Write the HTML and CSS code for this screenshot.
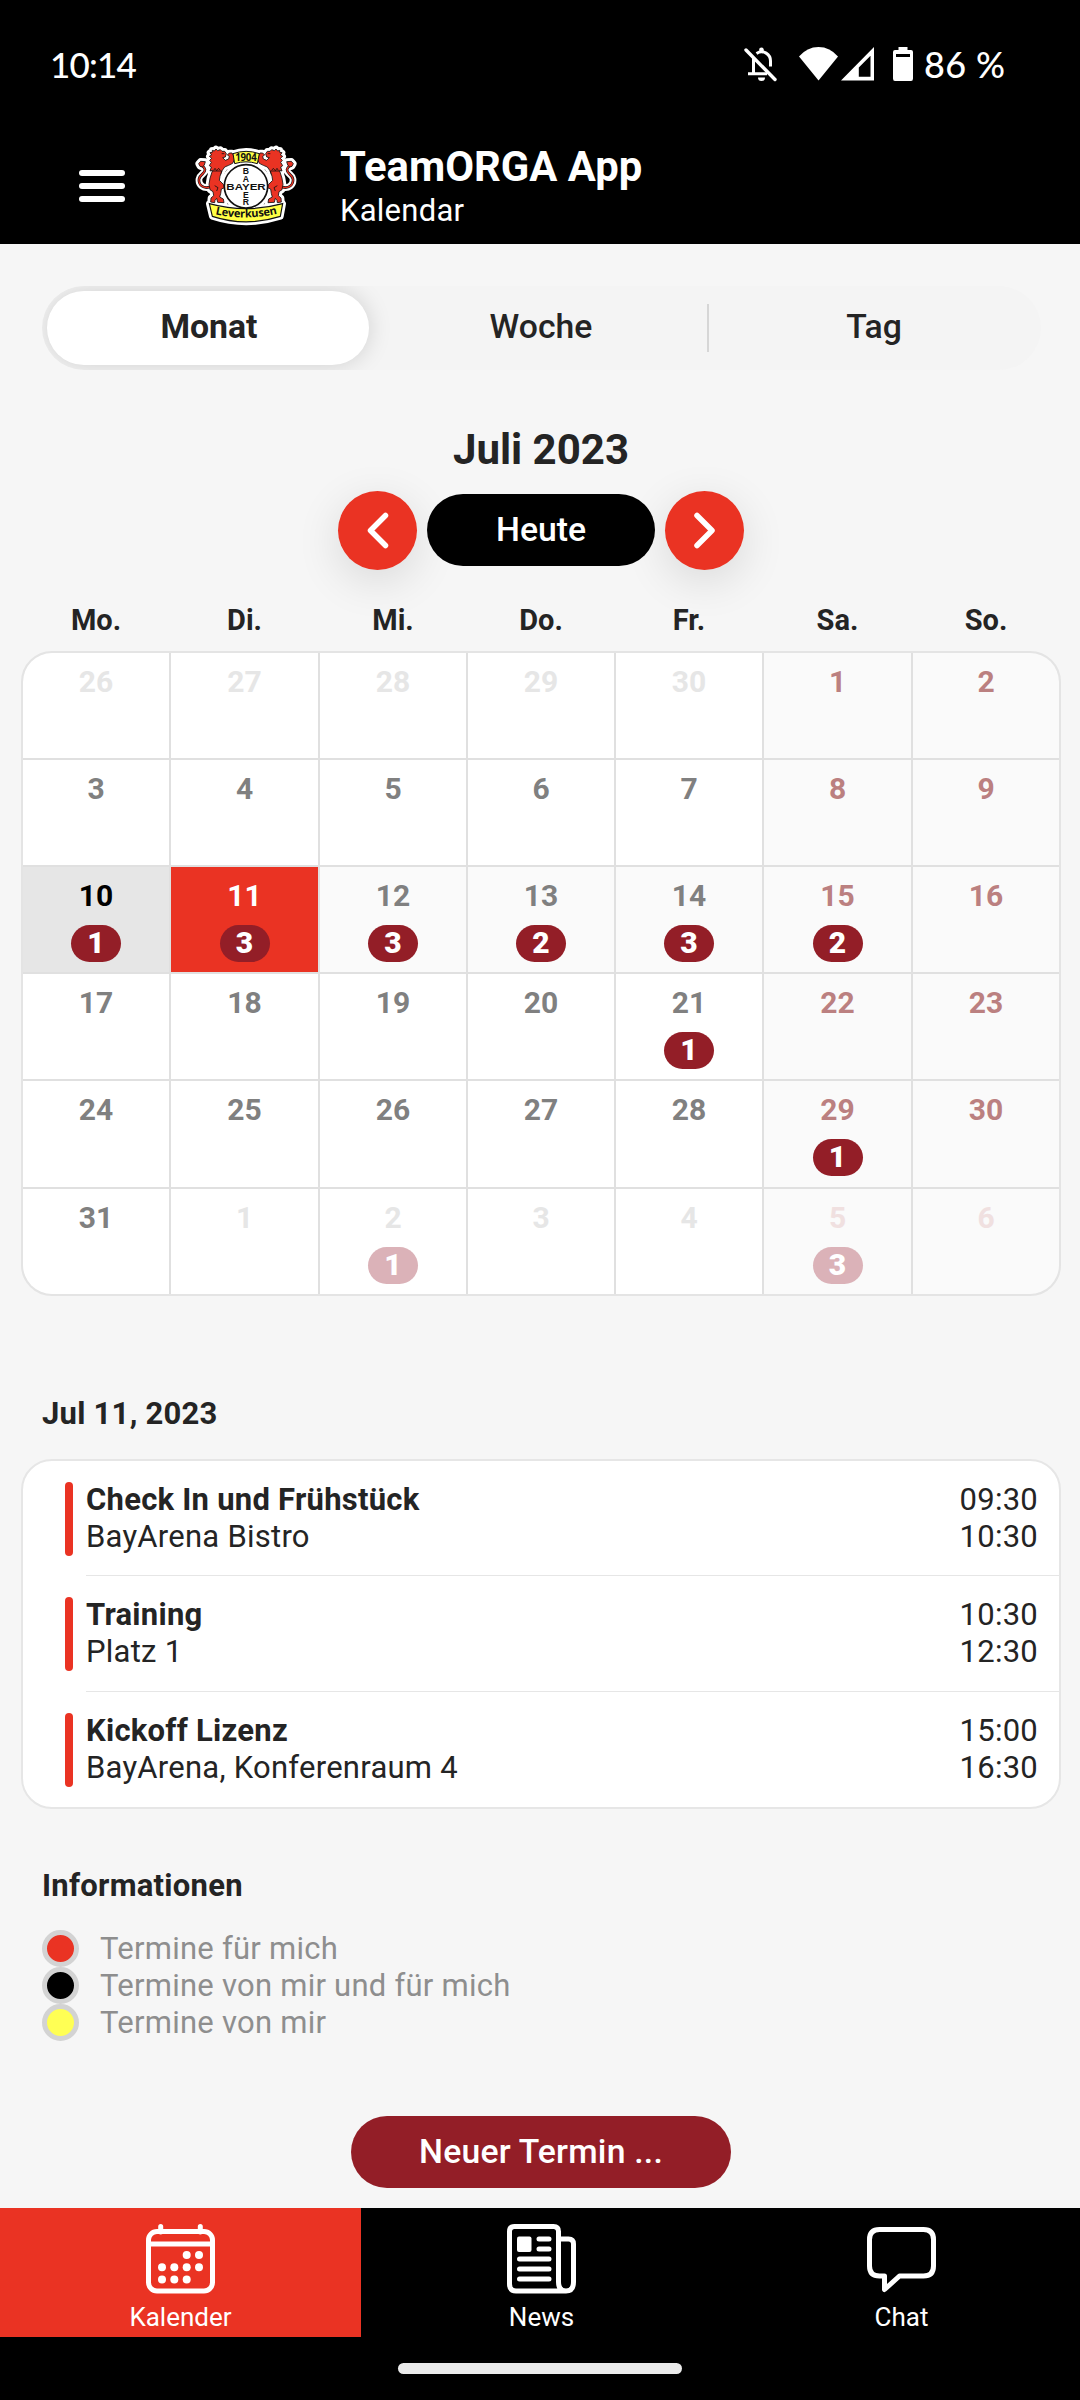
FILE: index.html
```html
<!DOCTYPE html>
<html lang="de">
<head>
<meta charset="utf-8">
<title>TeamORGA App</title>
<link rel="stylesheet" href="styles.css">
</head>
<body>
<div class="statusbar">
  <span class="clock">10:14</span>
  <div class="status-icons">
    <svg class="ic-bell" width="34" height="36" viewBox="0 0 34 36" fill="none" stroke="#fff" stroke-width="3">
      <path d="M9.500 11v17M4 27.700h19M12.500 7.500c7-4.500 14 1 14 7.500V20.500" />
      <circle cx="17.500" cy="4" r="2.400" fill="#fff" stroke="none"/>
      <path d="M14 31.500h7a3.500 3.500 0 0 1-7 0z" fill="#fff" stroke="none"/>
      <path d="M2 4L31 33.500" stroke-width="3.400" stroke-linecap="round"/>
    </svg>
    <svg class="ic-wifi" width="39" height="34" viewBox="0 0 39 34"><path d="M0 9.500Q8 0 19.500 0T39 9.500L19.500 33.500Z" fill="#fff"/></svg>
    <svg class="ic-signal" width="33" height="34" viewBox="0 0 33 34"><path fill-rule="evenodd" d="M0 33.500L33 0V33.500ZM17.800 20.500V29.800H29.500V8.800Z" fill="#fff"/></svg>
    <svg class="ic-battery" width="20" height="34" viewBox="0 0 20 34"><path fill-rule="evenodd" d="M5.500 0H14.500V3H18Q20 3 20 5V31.500Q20 34 18 34H2Q0 34 0 31.500V5Q0 3 2 3H5.500ZM3 7V10H17V7Z" fill="#fff"/></svg>
    <span class="battery-level">86 %</span>
  </div>
</div>

<header class="appbar">
  <div class="menu"><i></i><i></i><i></i></div>
  <svg class="crest" width="102" height="81" viewBox="45 46 306 243">
    <defs>
      <g id="lion">
        <path d="M97 62L103 64L108 58L113 63L121 60L126 65L134 65L139 72L136 82L128 84L136 92L146 88L148 80L142 76L148 70L156 70L160 76L163 90L158 101L146 107L134 112L127 122L122 134L117 126L110 135L106 126L99 134L97 122L90 124L94 112L88 108L94 98L89 92L95 86L88 80L95 76L90 69L97 68Z"/>
        <path d="M97 124L125 124L120 140L118 152L130 164L134 174L124 178L122 192L119 202L130 208L132 219L113 218L110 206L105 212L104 219L92 217L93 205L101 198L99 186L90 180L87 164L90 146Z"/>
      </g>
      <path id="tail" d="M90 172C70 178 55 166 57 148C59 134 76 132 75 120C74 112 68 110 64 106"/>
      <path id="tuft" d="M56 102L62 95L76 96L73 106L67 112L60 110Z"/>
      <path id="scroll" d="M88 222Q198 252 308 222L301 260Q198 293 97 260Z"/>
      <path id="year" d="M159 72Q198 58 238 72L232 102Q198 91 164 102Z"/>
      <path id="motto" d="M99 252Q198 276 299 250"/>
    </defs>
    <g fill="#fff" stroke="#fff" stroke-width="20" stroke-linejoin="round">
      <use href="#lion"/><use href="#tuft"/><use href="#tail" fill="none"/>
      <g transform="translate(396 0) scale(-1 1)"><use href="#lion"/><use href="#tuft"/><use href="#tail" fill="none"/></g>
      <use href="#scroll"/><use href="#year"/><circle cx="198" cy="170" r="66"/>
    </g>
    <g fill="#ea3323" stroke="#111" stroke-width="2.500" stroke-linejoin="round">
      <use href="#tail" fill="none" stroke-width="8"/><use href="#tail" fill="none" stroke="#ea3323" stroke-width="4"/>
      <use href="#tuft"/><use href="#lion"/><path d="M125 72h8M101 122l4-6 5 7 6-7 5 6M104 168l10 6-4 10" fill="none"/>
    </g>
    <g transform="translate(396 0) scale(-1 1)" fill="#ea3323" stroke="#111" stroke-width="2.500" stroke-linejoin="round">
      <use href="#tail" fill="none" stroke-width="8"/><use href="#tail" fill="none" stroke="#ea3323" stroke-width="4"/>
      <use href="#tuft"/><use href="#lion"/><path d="M125 72h8M101 122l4-6 5 7 6-7 5 6M104 168l10 6-4 10" fill="none"/>
    </g>
    <use href="#year" fill="#ffff45" stroke="#111" stroke-width="3"/>
    <circle cx="198" cy="170" r="65" fill="#fff" stroke="#111" stroke-width="5"/>
    <use href="#scroll" fill="#ffff45" stroke="#111" stroke-width="3.500"/>
    <g class="crest-text" text-anchor="middle">
      <text x="198" y="93" font-size="29" textLength="64">1904</text>
      <text class="wordmark" x="198" y="180" font-size="28" textLength="118" lengthAdjust="spacingAndGlyphs">BAYER</text>
      <text class="wordmark" x="198" y="132" font-size="26">B</text>
      <text class="wordmark" x="198" y="156" font-size="26">A</text>
      <text class="wordmark" x="198" y="204" font-size="26">E</text>
      <text class="wordmark" x="198" y="226" font-size="26">R</text>
      <text font-size="33"><textPath href="#motto" startOffset="50%" textLength="188">Leverkusen</textPath></text>
    </g>
  </svg>
  <div class="titles">
    <h1>TeamORGA App</h1>
    <p>Kalendar</p>
  </div>
</header>

<main class="content">
  <div class="segmented">
    <span class="segment active">Monat</span>
    <span class="segment">Woche</span>
    <span class="segment last">Tag</span>
  </div>

  <h2 class="month">Juli 2023</h2>
  <div class="pager">
    <span class="round"><svg width="79" height="79" viewBox="0 0 79 79"><path d="M47.500 24.500L32.500 39.500L47.500 54.500"/></svg></span>
    <span class="pill today">Heute</span>
    <span class="round"><svg width="79" height="79" viewBox="0 0 79 79"><path d="M32 24.500L47 39.500L32 54.500"/></svg></span>
  </div>

  <div class="weekdays"><span>Mo.</span><span>Di.</span><span>Mi.</span><span>Do.</span><span>Fr.</span><span>Sa.</span><span>So.</span></div>
  <div class="calendar">
    <div class="day out">26</div><div class="day out">27</div><div class="day out">28</div><div class="day out">29</div><div class="day out">30</div><div class="day we">1</div><div class="day we">2</div>
    <div class="day">3</div><div class="day">4</div><div class="day">5</div><div class="day">6</div><div class="day">7</div><div class="day we">8</div><div class="day we">9</div>
    <div class="day now">10<b>1</b></div><div class="day selected">11<b>3</b></div><div class="day week">12<b>3</b></div><div class="day week">13<b>2</b></div><div class="day week">14<b>3</b></div><div class="day we">15<b>2</b></div><div class="day we">16</div>
    <div class="day">17</div><div class="day">18</div><div class="day">19</div><div class="day">20</div><div class="day">21<b>1</b></div><div class="day we">22</div><div class="day we">23</div>
    <div class="day">24</div><div class="day">25</div><div class="day">26</div><div class="day">27</div><div class="day">28</div><div class="day we">29<b>1</b></div><div class="day we">30</div>
    <div class="day">31</div><div class="day out">1</div><div class="day out">2<b>1</b></div><div class="day out">3</div><div class="day out">4</div><div class="day we out">5<b>3</b></div><div class="day we out">6</div>
  </div>

  <h3 class="section date">Jul 11, 2023</h3>
  <div class="events">
    <div class="event"><i class="bar"></i><div class="row"><p><b>Check In und Frühstück</b><br>BayArena Bistro</p><p class="time">09:30<br>10:30</p></div></div>
    <div class="event"><i class="bar"></i><div class="row"><p><b>Training</b><br>Platz 1</p><p class="time">10:30<br>12:30</p></div></div>
    <div class="event"><i class="bar"></i><div class="row"><p><b>Kickoff Lizenz</b><br>BayArena, Konferenraum 4</p><p class="time">15:00<br>16:30</p></div></div>
  </div>

  <h3 class="section info">Informationen</h3>
  <ul class="legend">
    <li><i class="dot red"></i>Termine für mich</li>
    <li><i class="dot black"></i>Termine von mir und für mich</li>
    <li><i class="dot yellow"></i>Termine von mir</li>
  </ul>
  <span class="pill create">Neuer Termin ...</span>
</main>

<nav class="tabs">
  <div class="tab current">
    <svg width="69" height="70" viewBox="0 0 69 70">
      <g fill="none" stroke="#fff" stroke-width="5"><rect x="2.500" y="7.500" width="64" height="59.500" rx="8.500"/><path d="M2.500 20H66.500"/><path d="M14.700 2.500V8M54.300 2.500V8" stroke-linecap="round"/></g>
      <g fill="#fff"><circle cx="40.700" cy="31" r="4"/><circle cx="53" cy="31" r="4"/><circle cx="16" cy="43.300" r="4"/><circle cx="28.300" cy="43.300" r="4"/><circle cx="40.700" cy="43.300" r="4"/><circle cx="53" cy="43.300" r="4"/><circle cx="16" cy="55.600" r="4"/><circle cx="28.300" cy="55.600" r="4"/><circle cx="40.700" cy="55.600" r="4"/></g>
    </svg>
    <span>Kalender</span>
  </div>
  <div class="tab">
    <svg width="69" height="70" viewBox="0 0 69 70" fill="none" stroke="#fff" stroke-width="5">
      <path d="M60 67H9Q2.500 67 2.500 60V7.500Q2.500 2.500 7.500 2.500H46.500Q51.500 2.500 51.500 7.500V58Q51.500 67 59 67Q66.500 67 66.500 58V20Q66.500 15 61.500 15H51.500"/>
      <rect x="10" y="12.500" width="14.500" height="15.500" rx="2" fill="#fff" stroke="none"/>
      <path d="M32 15H42M32 25H42M12.500 35H42M12.500 45H42M12.500 55H42" stroke-linecap="round"/>
    </svg>
    <span>News</span>
  </div>
  <div class="tab">
    <svg width="69" height="70" viewBox="0 0 69 70" fill="none" stroke="#fff" stroke-width="5" stroke-linejoin="round"><path d="M12.500 5.500H56.500Q66.500 5.500 66.500 15.500V42Q66.500 52 56.500 52H32.500L17.500 65.500V52H12.500Q2.500 52 2.500 42V15.500Q2.500 5.500 12.500 5.500Z"/></svg>
    <span>Chat</span>
  </div>
</nav>
<div class="homebar"><i></i></div>
</body>
</html>
```
FILE: styles.css
```css
* { box-sizing: border-box; }
body {
  margin: 0; width: 1080px; height: 2400px; overflow: hidden;
  display: flex; flex-direction: column;
  font-family: Roboto, sans-serif; font-size: 31px; color: #242424; background: #f6f6f6;
}
h1, h2, h3, p, ul { margin: 0; padding: 0; }

.statusbar { height: 128px; padding: 0 75px 0 50px; background: #000; color: #fff; display: flex; justify-content: space-between; align-items: center; }
.clock, .battery-level { font-family: Lato, sans-serif; font-weight: 500; font-size: 35px; line-height: 44px; }
.clock { letter-spacing: -0.8px; }
.battery-level { width: 81px; white-space: nowrap; font-size: 36px; letter-spacing: .4px; }
.status-icons { display: flex; align-items: center; }
.ic-bell { margin-right: 21px; }
.ic-wifi { margin-right: 3px; }
.ic-signal { margin-right: 19px; }
.ic-battery { margin-right: 11px; }

.appbar { height: 116px; padding-left: 79px; background: #000; color: #fff; display: flex; align-items: flex-start; }
.menu { width: 46px; margin-top: 42px; display: flex; flex-direction: column; gap: 7px; }
.menu i { height: 6px; border-radius: 3px; background: #fff; }
.crest { margin: 17px 43px 0 70px; }
.crest-text { font-family: "Open Sans", sans-serif; font-weight: 700; fill: #111; }
.wordmark { font-family: "Liberation Sans", sans-serif; }
.titles { margin-top: 14px; }
.titles h1 { font-size: 41.8px; line-height: 50px; font-weight: 700; }
.titles p { font-size: 31px; line-height: 38px; letter-spacing: .25px; }

.content { height: 1964px; padding: 42px 19px 0 21px; display: flex; flex-direction: column; }
.segmented { height: 84px; margin: 0 20px 0 21px; border-radius: 42px; background: #f4f4f4; display: grid; grid-template-columns: 333px 332px 334px; overflow: hidden; }
.segment { height: 84px; line-height: 81px; text-align: center; font-size: 33.75px; font-weight: 500; }
.segment.active { height: 74px; line-height: 71px; margin: 5px 6px 5px 5px; padding-left: 2px; font-weight: 700; background: #fff; border-radius: 37px; box-shadow: 0 0 23px rgba(0,0,0,.15); }
.segment.last { background: linear-gradient(#d6d6d6, #d6d6d6) 0 18px / 2px 48px no-repeat; }

.month { margin-top: 53px; text-align: center; font-size: 42px; line-height: 54px; font-weight: 700; }
.pager { margin-top: 14px; height: 79px; display: flex; justify-content: center; align-items: center; gap: 10px; }
.round { width: 79px; height: 79px; border-radius: 50%; background: #ea3323; box-shadow: 0 11px 45px rgba(0,0,0,.12); }
.round svg { display: block; fill: none; stroke: #fff; stroke-width: 5.500; stroke-linecap: round; stroke-linejoin: round; }
.pill { height: 72px; line-height: 72px; border-radius: 36px; color: #fff; text-align: center; font-size: 33.75px; font-weight: 500; }
.today { width: 228px; margin-bottom: 1px; background: #000; }

.weekdays, .calendar { display: grid; gap: 2px; grid-template-columns: 146px 147px 146px 146px 146px 147px 146px; }
.weekdays { margin-top: 30px; height: 40px; padding: 0 2px; text-align: center; font-size: 29px; line-height: 40px; font-weight: 700; }
.calendar {
  margin-top: 11px; height: 645px; overflow: hidden;
  grid-template-rows: 105px 105px 105px 105px 106px 105px;
  border: 2px solid #e4e4e4; border-radius: 31px; background: #e0e0e0;
}
.day { padding-top: 9px; background: #fff; color: #808080; font-size: 30px; line-height: 40px; font-weight: 700; display: flex; flex-direction: column; align-items: center; }
.day b { width: 50px; height: 37px; margin-top: 9px; line-height: 36px; border-radius: 18.500px; text-align: center; color: #fff; background: #931e27; }
.week, .we { background: #fafafa; }
.we { color: #bb8080; }
.out { color: #e6e6e6; }
.we.out { color: #f0e0e0; }
.out b { background: #dbb2b8; }
.now { background: #e6e6e6; color: #000; }
.selected { background: #ea3323; color: #fff; }

.section { padding-left: 21px; font-size: 31px; line-height: 40px; font-weight: 700; letter-spacing: .25px; }
.date { margin-top: 98px; }
.events { margin-top: 25px; height: 350px; border: 2px solid #e6e6e6; border-radius: 31px; background: #fff; overflow: hidden; display: flex; flex-direction: column; letter-spacing: .25px; }
.event { flex: 1; padding-left: 42px; display: flex; gap: 13px; }
.bar { width: 8px; height: 74px; margin-top: 21px; border-radius: 4px; background: #ea3323; }
.row { flex: 1; padding: 20px 21px 0 0; display: flex; justify-content: space-between; line-height: 37px; border-bottom: 1px solid #e6e6e6; }
.event:last-child .row { border: 0; }

.info { margin-top: 57px; }
.legend { margin-top: 24px; padding-left: 21px; list-style: none; color: #8e8e8e; letter-spacing: .25px; }
.legend li { height: 37px; line-height: 37px; display: flex; gap: 21px; }
.dot { width: 37px; height: 37px; border: 5px solid #d3d3d3; border-radius: 50%; }
.red { background: #ea3323; }
.black { background: #000; }
.yellow { background: #ffff54; }
.create { width: 380px; margin: 75px auto 0 330px; background: #931e27; letter-spacing: .2px; }

.tabs { height: 129px; background: #000; color: #fff; display: grid; grid-template-columns: 361px 361px 359px; }
.tab { display: flex; flex-direction: column; align-items: center; padding-top: 16px; font-size: 26px; line-height: 32px; }
.tab span { margin-top: 7px; }
.current { background: #ea3323; }
.homebar { height: 63px; padding-top: 26px; background: #000; display: flex; justify-content: center; }
.homebar i { width: 284px; height: 11px; border-radius: 5.500px; background: #ebebeb; }
```
